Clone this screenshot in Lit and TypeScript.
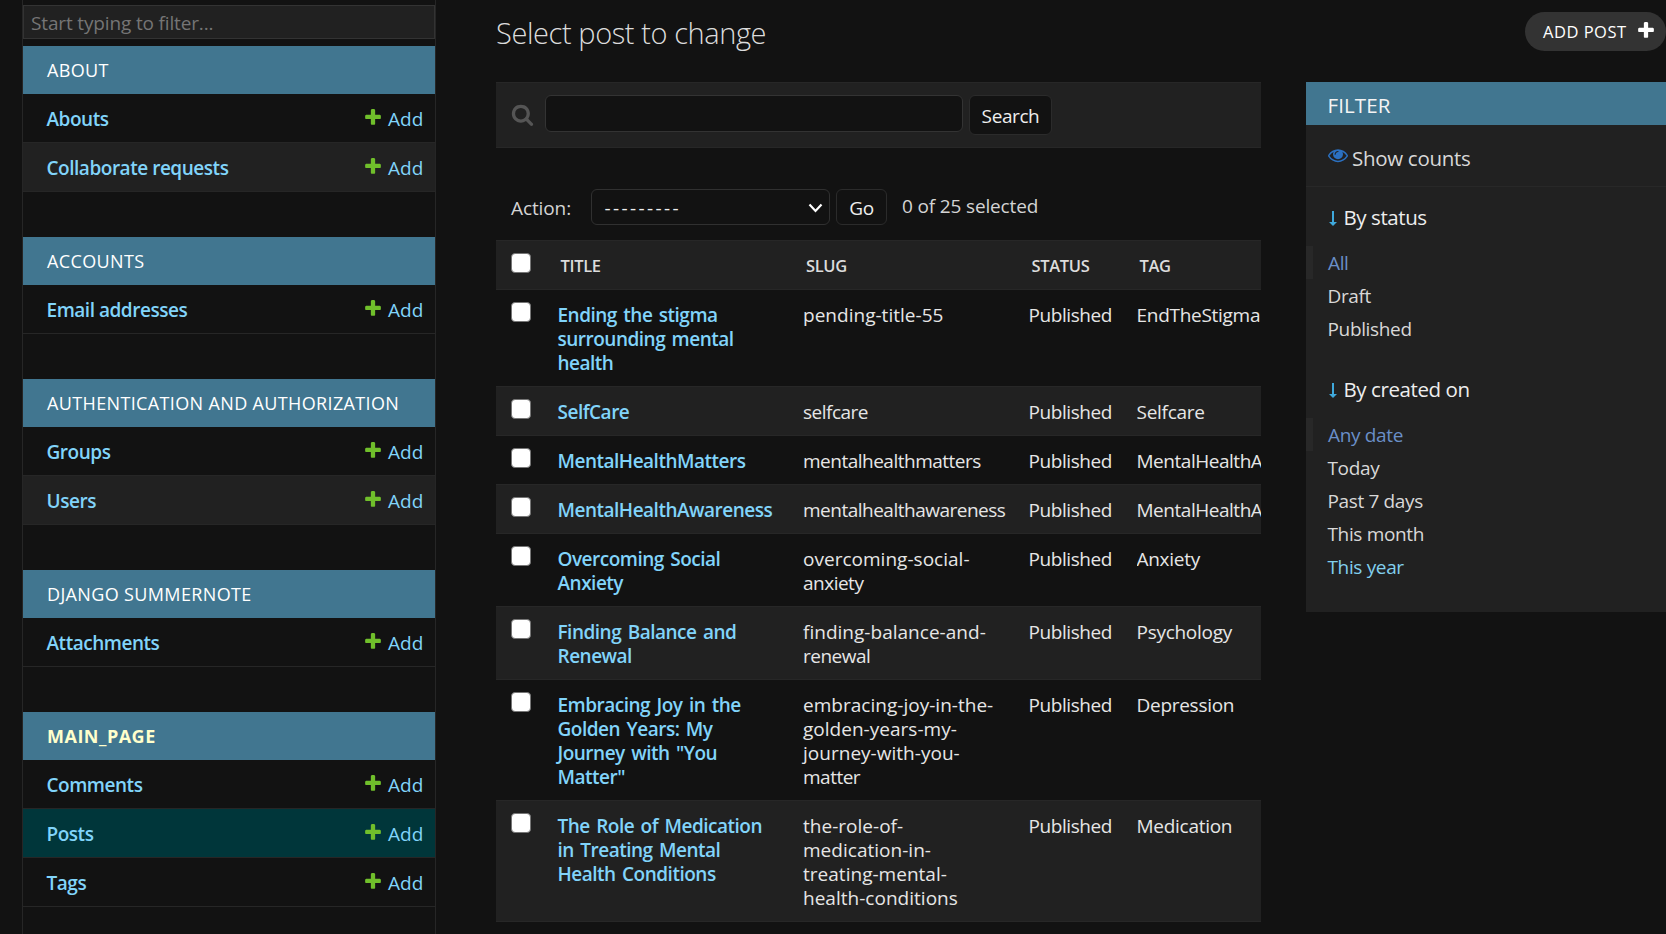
import { LitElement, html, css, svg } from 'lit';
import { customElement } from 'lit/decorators.js';
import { classMap } from 'lit/directives/class-map.js';

const PLUS =
  'M1600 796v192q0 40-28 68t-68 28h-416v416q0 40-28 68t-68 28h-192q-40 0-68-28t-28-68v-416h-416q-40 0-68-28t-28-68v-192q0-40 28-68t68-28h416v-416q0-40 28-68t68-28h192q40 0 68 28t28 68v416h416q40 0 68 28t28 68z';
const EYE =
  'M1664 960q-152-236-381-353 61 104 61 225 0 185-131.5 316.5t-316.5 131.5-316.5-131.5-131.5-316.5q0-121 61-225-229 117-381 353 133 205 333.5 326.5t434.5 121.5 434.5-121.5 333.5-326.5zm-720-384q0-20-14-34t-34-14q-125 0-214.5 89.5t-89.5 214.5q0 20 14 34t34 14 34-14 14-34q0-86 61-147t147-61q20 0 34-14t14-34zm848 384q0 34-20 69-140 230-376.5 368.5t-499.5 138.5-499.5-139-376.5-368q-20-35-20-69t20-69q140-229 376.5-368t499.5-139 499.5 139 376.5 368q20 35 20 69z';
const LOUPE =
  'M1216 832q0-185-131.5-316.5t-316.5-131.5-316.5 131.5-131.5 316.5 131.5 316.5 316.5 131.5 316.5-131.5 131.5-316.5zm512 832q0 52-38 90t-90 38q-54 0-90-38l-343-342q-179 124-399 124-143 0-273.5-55.5t-225-150-150-225-55.5-273.5 55.5-273.5 150-225 225-150 273.5-55.5 273.5 55.5 225 150 150 225 55.5 273.5q0 220-124 399l343 343q37 37 37 90z';

const icon = (d: string, cls: string) =>
  html`<svg class=${'icon ' + cls} viewBox="0 0 1792 1792">${svg`<path d=${d}></path>`}</svg>`;

const reset = css`
  * { box-sizing: border-box; }
  .icon { display: block; flex: none; fill: currentColor; }
`;

interface AppModule { name: string; current?: boolean; models: string[]; }

const MODULES: AppModule[] = [
  { name: 'ABOUT', models: ['Abouts', 'Collaborate requests'] },
  { name: 'ACCOUNTS', models: ['Email addresses'] },
  { name: 'AUTHENTICATION AND AUTHORIZATION', models: ['Groups', 'Users'] },
  { name: 'DJANGO SUMMERNOTE', models: ['Attachments'] },
  { name: 'MAIN_PAGE', current: true, models: ['Comments', 'Posts', 'Tags'] },
];

interface Post { title: string[]; slug: string[]; tag: string; }

const POSTS: Post[] = [
  { title: ['Ending the stigma', 'surrounding mental', 'health'], slug: ['pending-title-55'], tag: 'EndTheStigma' },
  { title: ['SelfCare'], slug: ['selfcare'], tag: 'Selfcare' },
  { title: ['MentalHealthMatters'], slug: ['mentalhealthmatters'], tag: 'MentalHealthAwareness' },
  { title: ['MentalHealthAwareness'], slug: ['mentalhealthawareness'], tag: 'MentalHealthAwareness' },
  { title: ['Overcoming Social', 'Anxiety'], slug: ['overcoming-social-', 'anxiety'], tag: 'Anxiety' },
  { title: ['Finding Balance and', 'Renewal'], slug: ['finding-balance-and-', 'renewal'], tag: 'Psychology' },
  {
    title: ['Embracing Joy in the', 'Golden Years: My', 'Journey with "You', 'Matter"'],
    slug: ['embracing-joy-in-the-', 'golden-years-my-', 'journey-with-you-', 'matter'],
    tag: 'Depression',
  },
  {
    title: ['The Role of Medication', 'in Treating Mental', 'Health Conditions'],
    slug: ['the-role-of-', 'medication-in-', 'treating-mental-', 'health-conditions'],
    tag: 'Medication',
  },
];

@customElement('nav-sidebar')
class NavSidebar extends LitElement {
  static styles = [reset, css`
    :host {
      display: block; box-sizing: border-box; width: 414px; margin-left: 22px; padding-top: 5px;
      border: 1px solid #262626; border-width: 0 1px; overflow: hidden;
    }
    .filter {
      height: 34px; padding-left: 7px; border: 1px solid #333; background: #212121; color: #757575;
      line-height: 35px; letter-spacing: -0.15px; margin-bottom: 7px;
    }
    .module { margin-bottom: 45px; }
    .caption {
      height: 48px; padding-left: 24px; background: #417690; color: #fff;
      font-size: 18px; line-height: 49px; letter-spacing: 0.36px;
    }
    .caption.current { color: #ffffcc; font-weight: 700; letter-spacing: 0.5px; }
    .row {
      display: flex; height: 49px; padding: 13px 12px 0 23.5px; line-height: 24px;
      border-bottom: 1px solid #262626; color: #81d4fa;
    }
    .row:nth-child(odd) { background: #212121; }
    .row.current { background: #00363a; }
    .name { flex: 1; font-weight: 600; letter-spacing: -0.47px; }
    .plus { width: 20px; height: 20px; color: #70bf2b; margin-right: 5px; }
    .add { width: 35px; letter-spacing: 0.05px; }
  `];

  render() {
    return html`
      <div class="filter">Start typing to filter...</div>
      ${MODULES.map((m) => html`
        <div class="module">
          <div class=${classMap({ caption: true, current: !!m.current })}>${m.name}</div>
          ${m.models.map((name) => html`
            <div class=${classMap({ row: true, current: name === 'Posts' })}>
              <span class="name">${name}</span>${icon(PLUS, 'plus')}<span class="add">Add</span>
            </div>`)}
        </div>`)}
    `;
  }
}

@customElement('change-list')
class ChangeList extends LitElement {
  static styles = [reset, css`
    :host { display: block; width: 765px; }
    .toolbar {
      display: flex; align-items: flex-start; height: 66px; padding: 12px 0 0 15px;
      background: #212121; border: 1px solid #272727; border-width: 1px 0;
    }
    .loupe { width: 23px; height: 23px; color: #555; margin: 8px 11px 0 0; }
    .query { width: 418px; height: 37px; border: 1px solid #333; border-radius: 6px; background: #121212; margin-right: 6px; }
    .button {
      border: 1px solid #2b2b2b; border-radius: 6px; background: #121212; color: #eee;
      text-align: center; letter-spacing: -0.4px;
    }
    .search { width: 83px; height: 40px; line-height: 40px; }
    .actions { display: flex; padding: 41px 0 15px 15px; height: 92px; color: #d4d4d4; }
    .label { width: 80px; line-height: 38px; letter-spacing: -0.1px; }
    .select {
      display: flex; justify-content: space-between; width: 239px; height: 36px; padding: 0 6px 0 12.5px;
      border: 1px solid #303030; border-radius: 6px; color: #eee; line-height: 37px; letter-spacing: 2.4px; margin-right: 6px;
    }
    .chevron { width: 15px; height: 10px; margin-top: 13px; fill: none; stroke: #fff; stroke-width: 2.2; }
    .go { width: 51px; height: 36px; line-height: 37px; }
    .counter { margin-left: 15px; line-height: 34px; letter-spacing: -0.15px; }
    .results { overflow: hidden; }
    .row {
      display: grid; grid-template-columns: 46.5px 245.5px 225.5px 108px 1fr; padding: 12px 0 11px 15px;
      border-bottom: 1px solid #272727; color: #e6e6e6; line-height: 24px; letter-spacing: -0.5px;
      white-space: nowrap;
    }
    .row:nth-child(odd) { background: #212121; }
    .cell { padding-top: 1px; }
    .title { color: #81d4fa; font-weight: 600; word-spacing: 2px; }
    .hyphened { letter-spacing: 0.02px; }
    .status { letter-spacing: -0.42px; }
    .tag { overflow: hidden; letter-spacing: -0.28px; }
    .tag.long { letter-spacing: -0.47px; }
    .box { width: 19.5px; height: 19.5px; border: 1px solid #767676; border-radius: 4px; background: #fff; }
    .head {
      height: 50px; padding-top: 12px; border-top: 1px solid #272727; color: #dcdcdc;
      font-size: 16.5px; font-weight: 600; letter-spacing: -0.35px;
    }
    .head .cell { padding: 1px 0 0 3px; }
  `];

  private lines(text: string[]) {
    return text.map((t, i) => html`${i ? html`<br>` : ''}<span class=${classMap({ hyphened: t.includes('-') })}>${t}</span>`);
  }

  render() {
    return html`
      <div class="toolbar">
        ${icon(LOUPE, 'loupe')}
        <div class="query"></div>
        <div class="button search">Search</div>
      </div>
      <div class="actions">
        <span class="label">Action:</span>
        <div class="select">---------<svg class="chevron" viewBox="0 0 15 10"><path d="M1.5 1.5L7.5 8L13.5 1.5"></path></svg></div>
        <div class="button go">Go</div>
        <span class="counter">0 of 25 selected</span>
      </div>
      <div class="results">
        <div class="row head">
          <span class="box"></span>
          ${['TITLE', 'SLUG', 'STATUS', 'TAG'].map((h) => html`<span class="cell">${h}</span>`)}
        </div>
        ${POSTS.map((p) => html`
          <div class="row">
            <span class="box"></span>
            <span class="cell title">${this.lines(p.title)}</span>
            <span class="cell">${this.lines(p.slug)}</span>
            <span class="cell status">Published</span>
            <span class=${classMap({ cell: true, tag: true, long: p.tag.length > 12 })}>${p.tag}</span>
          </div>`)}
      </div>
    `;
  }
}

@customElement('filter-panel')
class FilterPanel extends LitElement {
  static styles = [reset, css`
    :host {
      display: block; box-sizing: border-box; width: 360px; height: 530px; margin-left: 45px;
      background: #212121; color: #d8d8d8; letter-spacing: -0.35px;
    }
    .heading {
      height: 43px; padding-left: 21.5px; background: #417690; color: #f4f4f4;
      font-size: 20.5px; line-height: 46px; letter-spacing: 0.1px;
    }
    .counts {
      display: flex; height: 62px; padding: 20px 0 0 22px; border-bottom: 1px solid #282828;
      font-size: 20.5px; line-height: 27px; letter-spacing: -0.3px;
    }
    .eye { width: 20px; height: 20px; color: #2b70c0; margin-right: 4px; }
    .group { padding: 17px 0 27px; }
    .group + .group { padding-top: 4px; }
    .by {
      display: flex; padding-left: 22px; margin-bottom: 15px; color: #eee;
      font-size: 20.5px; line-height: 27px; letter-spacing: -0.42px;
    }
    .arrow { width: 8px; height: 15px; margin: 7px 6.5px 0 1px; fill: #3fa9dc; }
    .choice { height: 33px; padding-left: 21.5px; line-height: 34px; }
    .choice.selected { border-left: 7px solid #282828; padding-left: 15px; color: #6a8fc8; }
    .choice.active { color: #81d0ee; }
  `];

  private group(title: string, items: string[]) {
    return html`
      <div class="group">
        <div class="by">
          <svg class="arrow" viewBox="0 0 8 15"><path d="M3 0h2v11h3L4 15L0 11h3z"></path></svg>${title}
        </div>
        ${items.map((t, i) => html`
          <div class=${classMap({ choice: true, selected: i === 0, active: t === 'This year' })}>${t}</div>`)}
      </div>`;
  }

  render() {
    return html`
      <div class="heading">FILTER</div>
      <div class="counts">${icon(EYE, 'eye')}Show counts</div>
      ${this.group('By status', ['All', 'Draft', 'Published'])}
      ${this.group('By created on', ['Any date', 'Today', 'Past 7 days', 'This month', 'This year'])}
    `;
  }
}

@customElement('app-root')
class AppRoot extends LitElement {
  static styles = [reset, css`
    :host {
      display: flex; width: 1666px; height: 934px; overflow: hidden; background: #121212;
      font: 400 19px 'Open Sans', 'Noto Sans', sans-serif;
    }
    .main { margin-left: 60px; width: 1170px; }
    .top { display: flex; justify-content: space-between; height: 82px; padding-top: 12px; }
    .heading { color: #dcdcdc; font-size: 29px; font-weight: 300; line-height: 42px; letter-spacing: -0.42px; }
    .add {
      display: flex; height: 39px; width: 141px; padding-left: 18px; border-radius: 20px; background: #333;
      color: #fff; font-size: 16.5px; line-height: 39px; letter-spacing: 0.5px;
    }
    .plus { width: 20px; height: 20px; margin: 8px 0 0 9px; }
    .body { display: flex; align-items: flex-start; }
  `];

  render() {
    return html`
      <nav-sidebar></nav-sidebar>
      <div class="main">
        <div class="top">
          <span class="heading">Select post to change</span>
          <div class="add">ADD POST${icon(PLUS, 'plus')}</div>
        </div>
        <div class="body">
          <change-list></change-list>
          <filter-panel></filter-panel>
        </div>
      </div>
    `;
  }
}
